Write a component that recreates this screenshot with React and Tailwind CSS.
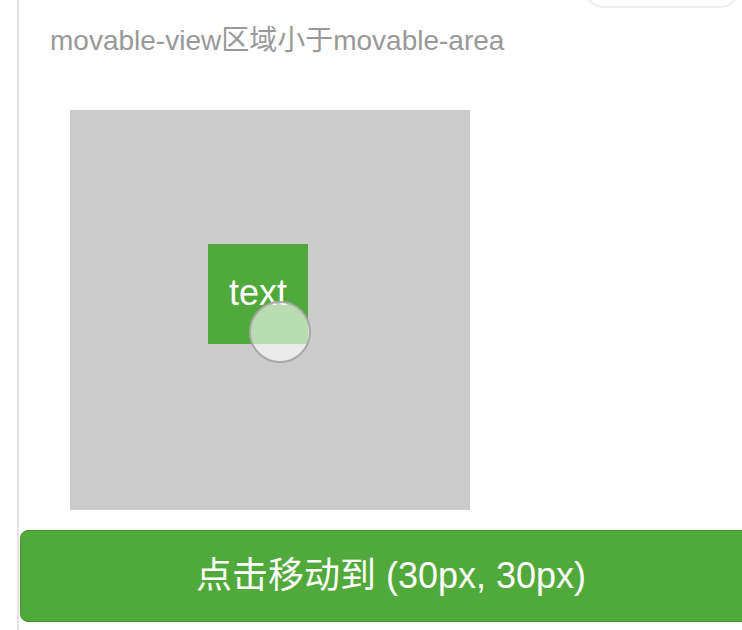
import React from 'react';

export default function App() {
  return (
    <div className="w-[742px] h-[630px] overflow-hidden bg-white font-['Liberation_Sans','Noto_Sans_CJK_SC',sans-serif]">
      <div className="ml-[17px] h-full border-l-2 border-[#e3e3e3] flex flex-col">
        {/* top pill, mostly scrolled out */}
        <div className="flex justify-end pr-[2px]">
          <div className="w-[156px] h-[40px] -mt-[32px] rounded-full border-2 border-[#efefef] bg-white" />
        </div>

        <p className="pl-[31px] mt-[15px] text-[28px] leading-[36px] text-[#999]">
          movable-view区域小于movable-area
        </p>

        {/* movable-area */}
        <div className="ml-[51px] mt-[51px] w-[400px] h-[400px] bg-[#cccccc] relative shrink-0">
          <div className="absolute left-[138px] top-[134px] w-[100px] h-[100px] bg-[#52a93b] flex items-center justify-center">
            <span className="text-white text-[36px] leading-none -mt-[3px]">text</span>
          </div>
          {/* touch indicator */}
          <div className="absolute left-[179px] top-[191px] w-[62px] h-[62px] rounded-full bg-white/60 border-2 border-[#a8a8a8]" />
        </div>

        <button className="ml-[1px] mt-[20px] w-[742px] h-[92px] shrink-0 rounded-[8px] bg-[#52a93b] border border-[#43922f] text-white text-[36px] flex items-center justify-center">
          点击移动到 (30px, 30px)
        </button>
      </div>
    </div>
  );
}
